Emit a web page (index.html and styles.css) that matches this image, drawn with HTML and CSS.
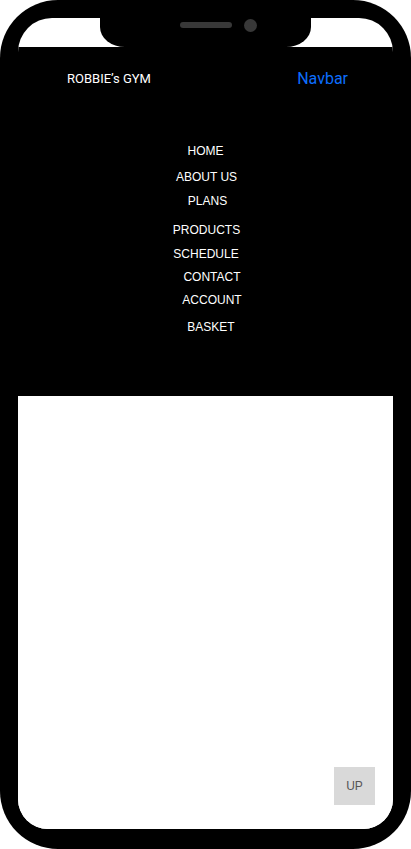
FILE: index.html
```html
<!DOCTYPE html>
<html lang="en">
<head>
<meta charset="utf-8">
<title>Robbie's Gym</title>
<link rel="stylesheet" href="styles.css">
</head>
<body>
<div class="phone">
  <div class="notch">
    <span class="speaker"></span>
    <span class="camera"></span>
  </div>
  <div class="screen">
    <div class="status"></div>
    <nav class="navbar">
      <div class="navbar-top">
        <span class="brand">ROBBIE’s GYM</span>
        <a class="navbar-title" href="#">Navbar</a>
      </div>
      <ul class="menu">
        <li class="menu-item">HOME</li>
        <li class="menu-item menu-item--about">ABOUT US</li>
        <li class="menu-item menu-item--plans">PLANS</li>
        <li class="menu-item menu-item--products">PRODUCTS</li>
        <li class="menu-item menu-item--schedule">SCHEDULE</li>
        <li class="menu-item menu-item--contact">CONTACT</li>
        <li class="menu-item menu-item--account">ACCOUNT</li>
        <li class="menu-item menu-item--basket">BASKET</li>
      </ul>
    </nav>
    <main class="content"></main>
    <button class="up-btn" type="button">UP</button>
  </div>
</div>
</body>
</html>
```

FILE: styles.css
```css
* { box-sizing: border-box; }

html, body {
  margin: 0;
  padding: 0;
  background: #fff;
}

body {
  font-family: "Liberation Sans", Arial, sans-serif;
}

.phone {
  position: relative;
  width: 411px;
  height: 849px;
  background: #000;
  border-radius: 58px;
  padding: 18px 18px 20px;
}

.notch {
  position: absolute;
  top: 0;
  left: 100px;
  width: 211px;
  height: 47px;
  background: #000;
  border-radius: 0 0 25px 25px / 0 0 20px 20px;
  z-index: 2;
}

.speaker {
  position: absolute;
  left: 80px;
  top: 22px;
  width: 52px;
  height: 6px;
  border-radius: 3px;
  background: #383838;
}

.camera {
  position: absolute;
  left: 144px;
  top: 19px;
  width: 13px;
  height: 13px;
  border-radius: 50%;
  background: #383838;
}

.screen {
  position: relative;
  height: 100%;
  background: #fff;
  border-radius: 34px 34px 30px 30px;
  overflow: hidden;
  display: flex;
  flex-direction: column;
}

.status {
  height: 29px;
  flex: none;
}

.navbar {
  flex: none;
  height: 349px;
  background: #000;
  padding-top: 18px;
}

.navbar-top {
  display: flex;
  justify-content: space-between;
  align-items: center;
  height: 26px;
  padding: 0 45px 0 49px;
}

.brand {
  font-family: Roboto, "Liberation Sans", sans-serif;
  font-size: 13px;
  color: #fff;
}

.navbar-title {
  font-family: Roboto, "Liberation Sans", sans-serif;
  font-size: 16px;
  color: #0d6efd;
  text-decoration: none;
}

.menu {
  list-style: none;
  margin: 48px 0 0;
  padding: 0;
  display: flex;
  flex-direction: column;
  align-items: center;
}

.menu-item {
  font-size: 12px;
  line-height: 24px;
  height: 24px;
  color: #fff;
}

.menu-item--about { margin-top: 2px; margin-left: 2px; }
.menu-item--plans { margin-left: 4px; }
.menu-item--products { margin-top: 5px; margin-left: 2px; }
.menu-item--schedule { margin-left: 1px; }
.menu-item--contact { margin-top: -1px; margin-left: 13px; }
.menu-item--account { margin-top: -1px; margin-left: 13px; }
.menu-item--basket { margin-top: 3px; margin-left: 11px; }

.content {
  flex: 1;
  background: #fff;
}

.up-btn {
  position: absolute;
  right: 18px;
  bottom: 24px;
  width: 41px;
  height: 38px;
  border: none;
  padding: 0;
  background: #d9d9d9;
  color: #555;
  font-family: "Liberation Sans", Arial, sans-serif;
  font-size: 12px;
}
```
